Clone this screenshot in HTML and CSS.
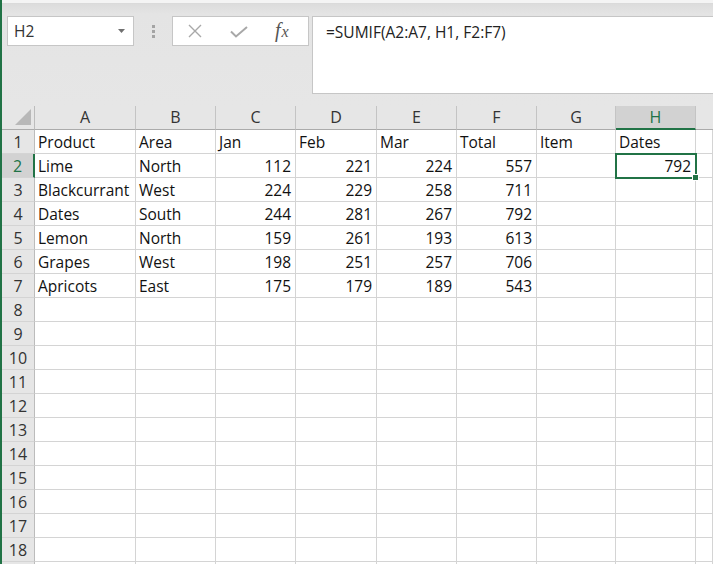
FILE: index.html
```html
<!DOCTYPE html>
<html>
<head>
<meta charset="utf-8">
<link rel="stylesheet" href="styles.css">
</head>
<body>
<div class="app">
  <div class="toolbar">
    <div class="namebox">
      <span class="nb-text">H2</span>
      <svg class="nb-arrow" width="7" height="4" viewBox="0 0 7 4"><path d="M0 0h7L3.5 4z" fill="#707070"/></svg>
    </div>
    <div class="grip"><span></span><span></span><span></span></div>
    <div class="fxbox">
      <svg class="ico-x" width="14" height="14" viewBox="0 0 14 14"><path d="M1 1L13 13M13 1L1 13" stroke="#a8a8a8" stroke-width="1.4" fill="none"/></svg>
      <svg class="ico-check" width="18" height="12" viewBox="0 0 18 12"><path d="M1 5.5L6 10.5L17 1" stroke="#a8a8a8" stroke-width="2" fill="none"/></svg>
      <span class="ico-fx">f<span class="fx-x">x</span></span>
    </div>
    <div class="formula">=SUMIF(A2:A7, H1, F2:F7)</div>
  </div>
  <div class="sheet">
    <div class="corner"><svg width="16" height="16" viewBox="0 0 16 16"><path d="M16 0V16H0z" fill="#b8b8b8"/></svg></div>
    <div class="ch">A</div><div class="ch">B</div><div class="ch">C</div><div class="ch">D</div><div class="ch">E</div><div class="ch">F</div><div class="ch">G</div><div class="ch sel">H</div><div class="ch last"></div>

    <div class="rh">1</div><div class="c">Product</div><div class="c">Area</div><div class="c">Jan</div><div class="c">Feb</div><div class="c">Mar</div><div class="c">Total</div><div class="c">Item</div><div class="c">Dates</div><div class="c"></div>
    <div class="rh sel">2</div><div class="c">Lime</div><div class="c">North</div><div class="c n">112</div><div class="c n">221</div><div class="c n">224</div><div class="c n">557</div><div class="c"></div><div class="c n active">792<span class="handle"></span></div><div class="c"></div>
    <div class="rh">3</div><div class="c">Blackcurrant</div><div class="c">West</div><div class="c n">224</div><div class="c n">229</div><div class="c n">258</div><div class="c n">711</div><div class="c"></div><div class="c"></div><div class="c"></div>
    <div class="rh">4</div><div class="c">Dates</div><div class="c">South</div><div class="c n">244</div><div class="c n">281</div><div class="c n">267</div><div class="c n">792</div><div class="c"></div><div class="c"></div><div class="c"></div>
    <div class="rh">5</div><div class="c">Lemon</div><div class="c">North</div><div class="c n">159</div><div class="c n">261</div><div class="c n">193</div><div class="c n">613</div><div class="c"></div><div class="c"></div><div class="c"></div>
    <div class="rh">6</div><div class="c">Grapes</div><div class="c">West</div><div class="c n">198</div><div class="c n">251</div><div class="c n">257</div><div class="c n">706</div><div class="c"></div><div class="c"></div><div class="c"></div>
    <div class="rh">7</div><div class="c">Apricots</div><div class="c">East</div><div class="c n">175</div><div class="c n">179</div><div class="c n">189</div><div class="c n">543</div><div class="c"></div><div class="c"></div><div class="c"></div>
    <div class="rh">8</div><div class="c"></div><div class="c"></div><div class="c"></div><div class="c"></div><div class="c"></div><div class="c"></div><div class="c"></div><div class="c"></div><div class="c"></div>
    <div class="rh">9</div><div class="c"></div><div class="c"></div><div class="c"></div><div class="c"></div><div class="c"></div><div class="c"></div><div class="c"></div><div class="c"></div><div class="c"></div>
    <div class="rh">10</div><div class="c"></div><div class="c"></div><div class="c"></div><div class="c"></div><div class="c"></div><div class="c"></div><div class="c"></div><div class="c"></div><div class="c"></div>
    <div class="rh">11</div><div class="c"></div><div class="c"></div><div class="c"></div><div class="c"></div><div class="c"></div><div class="c"></div><div class="c"></div><div class="c"></div><div class="c"></div>
    <div class="rh">12</div><div class="c"></div><div class="c"></div><div class="c"></div><div class="c"></div><div class="c"></div><div class="c"></div><div class="c"></div><div class="c"></div><div class="c"></div>
    <div class="rh">13</div><div class="c"></div><div class="c"></div><div class="c"></div><div class="c"></div><div class="c"></div><div class="c"></div><div class="c"></div><div class="c"></div><div class="c"></div>
    <div class="rh">14</div><div class="c"></div><div class="c"></div><div class="c"></div><div class="c"></div><div class="c"></div><div class="c"></div><div class="c"></div><div class="c"></div><div class="c"></div>
    <div class="rh">15</div><div class="c"></div><div class="c"></div><div class="c"></div><div class="c"></div><div class="c"></div><div class="c"></div><div class="c"></div><div class="c"></div><div class="c"></div>
    <div class="rh">16</div><div class="c"></div><div class="c"></div><div class="c"></div><div class="c"></div><div class="c"></div><div class="c"></div><div class="c"></div><div class="c"></div><div class="c"></div>
    <div class="rh">17</div><div class="c"></div><div class="c"></div><div class="c"></div><div class="c"></div><div class="c"></div><div class="c"></div><div class="c"></div><div class="c"></div><div class="c"></div>
    <div class="rh">18</div><div class="c"></div><div class="c"></div><div class="c"></div><div class="c"></div><div class="c"></div><div class="c"></div><div class="c"></div><div class="c"></div><div class="c"></div>
    <div class="rh"></div><div class="c"></div><div class="c"></div><div class="c"></div><div class="c"></div><div class="c"></div><div class="c"></div><div class="c"></div><div class="c"></div><div class="c"></div>
  </div>
</div>
</body>
</html>
```
FILE: styles.css
```css
html, body {
  margin: 0;
  padding: 0;
  height: 100%;
  overflow: hidden;
  background: #ffffff;
}
body {
  font-family: "Open Sans", "Liberation Sans", sans-serif;
  font-size: 15.5px;
  color: #111;
}
.app {
  border-left: 2px solid #217346;
  height: 564px;
  overflow: hidden;
  box-sizing: border-box;
}
.toolbar {
  height: 106px;
  box-sizing: border-box;
  padding: 16px 0 0 5px;
  display: flex;
  align-items: flex-start;
  background: linear-gradient(#f4f4f4 0, #f4f4f4 3px, #d8d8d8 3px, #dcdcdc 4px, #e4e4e4 14px, #e6e6e6 100%);
}
.namebox {
  width: 127px;
  height: 30px;
  box-sizing: border-box;
  background: #fff;
  border: 1px solid #c6c6c6;
  display: flex;
  align-items: center;
  justify-content: space-between;
  padding: 0 8px 0 6px;
  color: #333;
}
.nb-text { line-height: 28px; }
.nb-arrow { display: block; }
.grip {
  width: 38px;
  height: 30px;
  display: flex;
  flex-direction: column;
  align-items: center;
  justify-content: center;
  gap: 2px;
  box-sizing: border-box;
}
.grip span {
  width: 3px;
  height: 3px;
  background: #a4a4a4;
}
.fxbox {
  width: 137px;
  height: 30px;
  box-sizing: border-box;
  background: #fff;
  border: 1px solid #c6c6c6;
  display: flex;
  align-items: center;
  padding-left: 15px;
}
.ico-x { display: block; margin-top: -1px; }
.ico-check { display: block; margin-left: 28px; margin-top: 2px; }
.ico-fx {
  margin-left: 27px;
  font-family: "Liberation Serif", serif;
  font-style: italic;
  font-size: 20px;
  color: #555;
  line-height: 1;
  margin-top: -2px;
}
.fx-x { font-size: 16px; margin-left: 1px; }
.formula {
  flex: 1;
  margin-left: 3px;
  height: 78px;
  box-sizing: border-box;
  background: #fff;
  border: 1px solid #c6c6c6;
  border-right: none;
  padding: 4px 0 0 13px;
  line-height: 22px;
  color: #222;
}
.sheet {
  display: grid;
  grid-template-columns: 33px 101px 80px 80px 81px 80px 80px 79px 80px 1fr;
  grid-auto-rows: 24px;
}
.sheet > div {
  box-sizing: border-box;
  border-right: 1px solid #d4d4d4;
  border-bottom: 1px solid #d4d4d4;
  white-space: nowrap;
  overflow: visible;
}
.corner {
  background: #e6e6e6;
  border-right: 1px solid #bcbcbc !important;
  border-bottom: 1px solid #ababab !important;
  display: flex;
  align-items: flex-end;
  justify-content: flex-end;
  padding: 0 3px 4px 0;
}
.corner svg { display: block; }
.ch {
  background: #e6e6e6;
  border-right: 1px solid #c4c4c4 !important;
  border-bottom: 1px solid #ababab !important;
  text-align: center;
  line-height: 23px;
  font-size: 16px;
  color: #333;
}
.ch.sel {
  background: #d2d2d2;
  color: #217346;
  border-bottom: 2px solid #217346 !important;
  line-height: 22px;
}
.ch.last { border-right: none !important; }
.rh {
  background: #e6e6e6;
  border-right: 1px solid #bcbcbc !important;
  border-bottom: 1px solid #d4d4d4 !important;
  text-align: center;
  line-height: 23px;
  padding-top: 1px;
  font-size: 16px;
  color: #333;
}
.rh.sel {
  background: #d2d2d2;
  color: #217346;
  border-right: 2px solid #217346 !important;
}
.c {
  line-height: 23px;
  padding: 1px 3px 0;
  background: #fff;
}
.n { text-align: right; padding-right: 4px; }
.active {
  position: relative;
  outline: 2px solid #217346;
  outline-offset: -1px;
  z-index: 1;
}
.handle {
  position: absolute;
  right: -4px;
  bottom: -4px;
  width: 5px;
  height: 5px;
  background: #217346;
  border: 1px solid #fff;
}
```
